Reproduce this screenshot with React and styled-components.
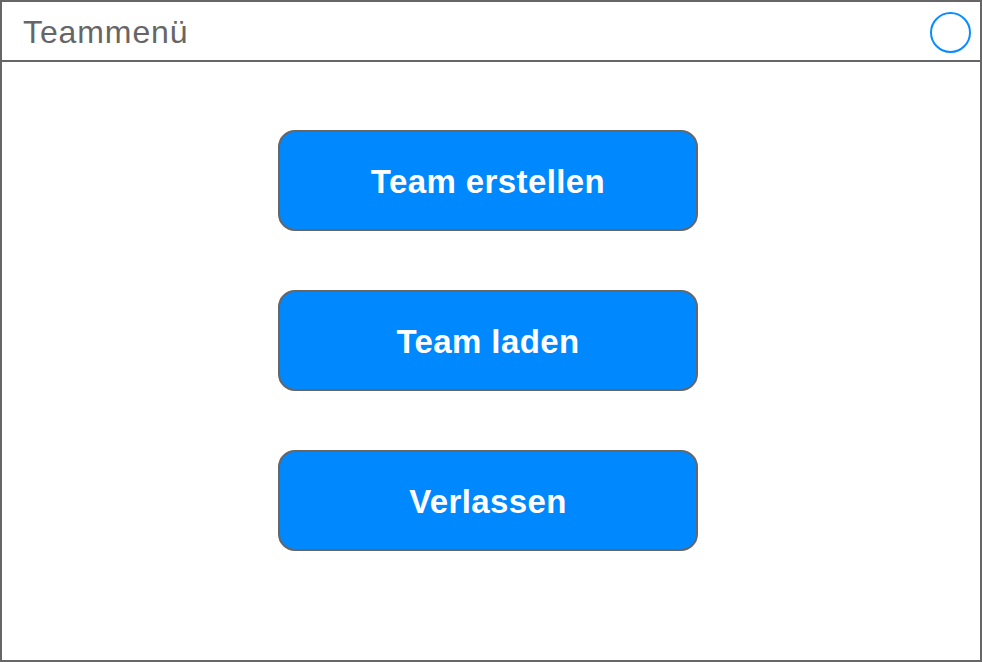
import styled, { createGlobalStyle } from "styled-components";

const GlobalStyle = createGlobalStyle`
  html, body {
    margin: 0;
    padding: 0;
    background: #ffffff;
  }
  * {
    box-sizing: border-box;
  }
`;

const App = () => {
  return (
    <>
      <GlobalStyle />
      <Frame>
        <Header>
          <Title>Teammenü</Title>
          <StatusDot />
        </Header>
        <Menu>
          <MenuButton>Team erstellen</MenuButton>
          <MenuButton>Team laden</MenuButton>
          <MenuButton>Verlassen</MenuButton>
        </Menu>
      </Frame>
    </>
  );
};

// Stile
const Frame = styled.div`
  display: flex;
  flex-direction: column;
  width: 982px;
  height: 662px;
  border: 2px solid #666666;
  background: #ffffff;
`;

const Header = styled.div`
  display: flex;
  align-items: center;
  justify-content: space-between;
  height: 60px;
  padding: 0 9px 0 21px;
  border-bottom: 2px solid #666666;
`;

const Title = styled.h1`
  margin: 0;
  padding-top: 2px;
  font-family: "Liberation Sans", Arial, sans-serif;
  font-size: 32px;
  font-weight: normal;
  color: #666666;
  letter-spacing: 0.9px;
`;

const StatusDot = styled.div`
  width: 41px;
  height: 41px;
  border-radius: 50%;
  border: 2px solid #0a8cff;
  margin-top: 2px;
`;

const Menu = styled.div`
  display: flex;
  flex-direction: column;
  align-items: flex-start;
  gap: 59px;
  padding: 68px 0 0 276px;
`;

const MenuButton = styled.button`
  display: flex;
  align-items: center;
  justify-content: center;
  width: 420px;
  height: 101px;
  border: 2px solid #666666;
  border-radius: 17px;
  background: #0088ff;
  color: #ffffff;
  font-family: "Liberation Sans", Arial, sans-serif;
  font-size: 33px;
  font-weight: bold;
  letter-spacing: 0.4px;
  cursor: pointer;
  padding: 3px 0 0;
`;

export default App;
